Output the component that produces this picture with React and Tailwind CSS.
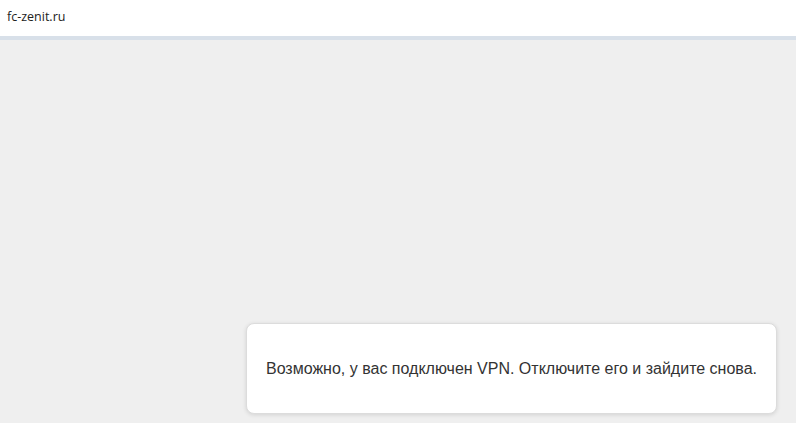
import React from 'react';

export default function App() {
  return (
    <div className="flex h-[423px] w-[796px] flex-col bg-[#efefef] font-['Liberation_Sans',Arial,sans-serif]">
      {/* шапка с адресом */}
      <div className="flex h-[40px] shrink-0 items-start border-b-4 border-[#d8e0e9] bg-white">
        <span className="mt-[8px] pl-[7px] text-[12.5px] leading-[18px] text-[#222] font-['Open_Sans',sans-serif]">
          fc-zenit.ru
        </span>
      </div>

      {/* уведомление о VPN */}
      <div className="flex flex-1 items-end justify-end pb-[9px] pr-[19px]">
        <div className="flex h-[91px] w-[531px] items-center justify-center rounded-[8px] border border-[#dcdcdc] bg-white px-[12px] shadow-[0_1px_4px_rgba(0,0,0,0.12)]">
          <p className="whitespace-nowrap text-[16px] leading-[20px] text-[#333]">
            Возможно, у вас подключен VPN. Отключите его и зайдите снова.
          </p>
        </div>
      </div>
    </div>
  );
}
